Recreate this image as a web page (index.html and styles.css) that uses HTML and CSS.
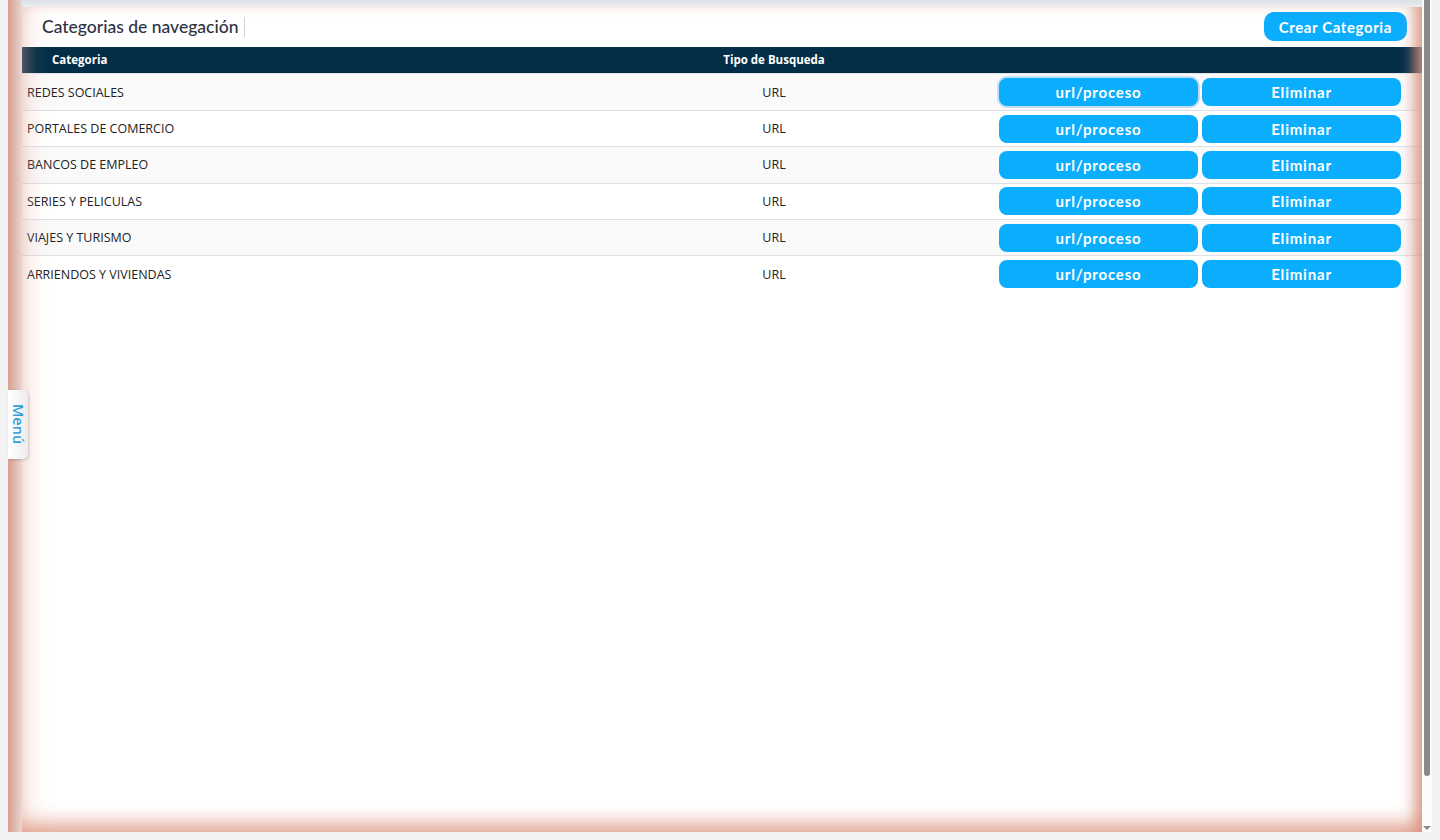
FILE: index.html
```html
<!DOCTYPE html>
<html lang="es">
<head>
<meta charset="utf-8">
<title>Categorias de navegación</title>
<link rel="stylesheet" href="styles.css">
</head>
<body>
<div class="frame">
  <div class="content">
    <div class="panel">
      <div class="toolbar">
        <h1 class="title">Categorias de navegación</h1>
        <button class="btn btn-create">Crear Categoria</button>
      </div>
      <table class="grid">
        <colgroup>
          <col class="c1"><col class="c2"><col class="c3">
        </colgroup>
        <thead>
          <tr><th class="th-cat">Categoria</th><th class="th-type">Tipo de Busqueda</th><th></th></tr>
        </thead>
        <tbody>
          <tr><td class="td-cat">REDES SOCIALES</td><td class="td-type">URL</td><td class="td-act"><div class="acts"><button class="btn btn-row focused">url/proceso</button><button class="btn btn-row">Eliminar</button></div></td></tr>
          <tr><td class="td-cat">PORTALES DE COMERCIO</td><td class="td-type">URL</td><td class="td-act"><div class="acts"><button class="btn btn-row">url/proceso</button><button class="btn btn-row">Eliminar</button></div></td></tr>
          <tr><td class="td-cat">BANCOS DE EMPLEO</td><td class="td-type">URL</td><td class="td-act"><div class="acts"><button class="btn btn-row">url/proceso</button><button class="btn btn-row">Eliminar</button></div></td></tr>
          <tr><td class="td-cat">SERIES Y PELICULAS</td><td class="td-type">URL</td><td class="td-act"><div class="acts"><button class="btn btn-row">url/proceso</button><button class="btn btn-row">Eliminar</button></div></td></tr>
          <tr><td class="td-cat">VIAJES Y TURISMO</td><td class="td-type">URL</td><td class="td-act"><div class="acts"><button class="btn btn-row">url/proceso</button><button class="btn btn-row">Eliminar</button></div></td></tr>
          <tr><td class="td-cat">ARRIENDOS Y VIVIENDAS</td><td class="td-type">URL</td><td class="td-act"><div class="acts"><button class="btn btn-row">url/proceso</button><button class="btn btn-row">Eliminar</button></div></td></tr>
        </tbody>
      </table>
    </div>
    <div class="menu-tab">Menú</div>
  </div>
  <div class="scrollbar">
    <div class="thumb"></div>
    <div class="arrow"></div>
  </div>
</div>
</body>
</html>
```

FILE: styles.css
```css
html, body {
  margin: 0;
  padding: 0;
  background: #f2f2f2;
  height: 840px;
  overflow: hidden;
}

.frame {
  margin-left: 8px;
  width: 1424px;
  height: 832px;
  display: flex;
}

.content {
  position: relative;
  flex: 1;
  display: flex;
  flex-direction: column;
  padding: 7px 0 0 14px;
  background:
    linear-gradient(to right, #d8a08f 0, #ddb2a6 5px, #e6d3ce 13px, #e8dcd8 14px, transparent 14px),
    linear-gradient(to bottom, #dce0e5 0, #e6e9ed 5px, #eceef1 7px);
}

.panel {
  position: relative;
  flex: 1;
  background: #fff;
}

.panel::after {
  content: "";
  position: absolute;
  inset: 0;
  pointer-events: none;
  box-shadow:
    inset -14px 0 14px -6px rgba(214, 146, 124, 0.85),
    inset 0 -16px 18px -6px rgba(222, 150, 128, 0.75),
    inset 22px 0 26px -18px rgba(232, 170, 150, 0.35);
}

.toolbar {
  box-sizing: border-box;
  height: 40px;
  display: flex;
  align-items: center;
  justify-content: space-between;
  padding: 0 15px 1px 20px;
}

.title {
  margin: 0;
  font-family: Lato, "Open Sans", sans-serif;
  font-size: 17.5px;
  font-weight: 500;
  color: #2c3242;
  padding-right: 6px;
  border-right: 1px solid #cfcfcf;
  line-height: 20px;
}

.btn {
  border: none;
  background: #0badfd;
  color: #fff;
  font-family: Lato, "Open Sans", sans-serif;
  font-weight: 700;
  cursor: pointer;
}

.btn-create {
  height: 29px;
  padding: 0 15px;
  border-radius: 10px;
  font-size: 15px;
  letter-spacing: 0.6px;
}

.grid {
  width: 100%;
  border-collapse: collapse;
  table-layout: fixed;
  font-family: "Open Sans", sans-serif;
}

.c1 { width: 529px; }
.c2 { width: 446px; }
.c3 { width: auto; }

.grid thead tr {
  background: #032e48;
  height: 26px;
}

.grid th {
  color: #fff;
  font-size: 11.5px;
  font-weight: 700;
  padding: 0;
}

.th-cat {
  text-align: left;
  padding-left: 30px !important;
}

.th-type {
  text-align: center;
}

.grid tbody tr + tr {
  border-top: 1px solid #dfe0e7;
}

.grid tbody tr:nth-child(odd) {
  background: #fafafa;
}

.grid td {
  font-size: 12.5px;
  color: #222;
  padding: 3.7px 2px 3.7px 2px;
}

.grid tbody tr:first-child td {
  padding-top: 4.7px;
  border-top: 1px solid #e4e5ea;
}

.td-cat {
  padding-left: 5px !important;
}

.td-type {
  text-align: center;
}

.acts {
  display: flex;
  gap: 4px;
}

.btn-row {
  width: 199px;
  height: 28px;
  border-radius: 8px;
  font-size: 15px;
  letter-spacing: 0.8px;
}

.btn-row.focused {
  box-shadow: 0 0 0 2px #c3ddf7;
}

.menu-tab {
  position: absolute;
  left: 0;
  top: 390px;
  width: 20px;
  height: 69px;
  box-sizing: border-box;
  background: linear-gradient(to right, #ffffff, #ececec);
  border-radius: 0 5px 5px 0;
  box-shadow: 1px 1px 3px rgba(0, 0, 0, 0.18);
  writing-mode: vertical-rl;
  display: flex;
  align-items: center;
  justify-content: center;
  font-family: "Open Sans", sans-serif;
  font-size: 14.5px;
  font-weight: 600;
  color: #2f9edb;
  line-height: 20px;
}

.scrollbar {
  width: 10px;
  background: #fbfbfb;
  display: flex;
  flex-direction: column;
  align-items: center;
}

.thumb {
  width: 6px;
  height: 776px;
  background: #8a8a8a;
  border-radius: 0 0 3px 3px;
}

.arrow {
  margin-top: auto;
  margin-bottom: 2px;
  width: 0;
  height: 0;
  border-left: 4px solid transparent;
  border-right: 4px solid transparent;
  border-top: 4px solid #8a8a8a;
}
```
